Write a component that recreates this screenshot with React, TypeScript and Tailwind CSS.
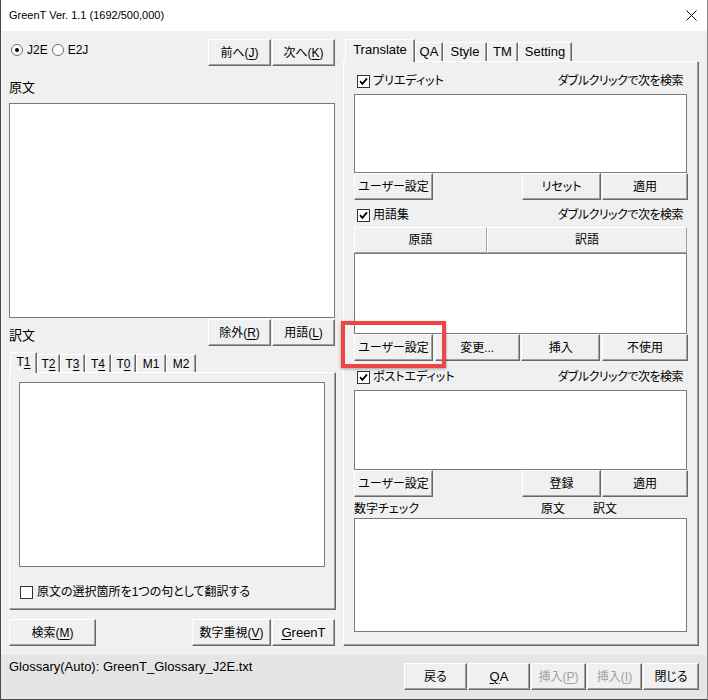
import React from "react";

type P = { children?: React.ReactNode; className?: string };

function Btn({ children, className = "", disabled = false }: P & { disabled?: boolean }) {
  return (
    <div
      className={`flex h-[27px] shrink-0 items-center justify-center border border-t-white border-l-white border-r-[#696969] border-b-[#696969] bg-[#f0f0f0] text-[12px] leading-[16px] shadow-[inset_-1px_-1px_0_#a0a0a0] ${disabled ? "text-[#a0a0a0]" : "text-black"} ${className}`}
    >
      {children}
    </div>
  );
}

function U({ children }: P) {
  return <span className="underline decoration-1 underline-offset-2">{children}</span>;
}

function CheckBox({ checked }: { checked?: boolean }) {
  return (
    <span className="flex h-[13px] w-[13px] shrink-0 items-center justify-center border border-[#333333] bg-white">
      {checked && (
        <svg width="9" height="9" viewBox="0 0 9 9">
          <path d="M1 4.2 L3.4 6.8 L8 1.4" stroke="#000" strokeWidth="1.8" fill="none" />
        </svg>
      )}
    </span>
  );
}

function Radio({ on }: { on?: boolean }) {
  return (
    <span className="flex h-[12px] w-[12px] shrink-0 items-center justify-center rounded-full border border-[#6d6d6d] bg-white">
      {on && <span className="h-[4px] w-[4px] rounded-full bg-black" />}
    </span>
  );
}

function Box({ className = "" }: P) {
  return <div className={`border border-[#7a7a7a] bg-white ${className}`} />;
}

function Tab({ children, sel, className = "" }: P & { sel?: boolean }) {
  return (
    <div
      className={`flex shrink-0 items-center justify-center border border-b-0 border-t-white border-l-white border-r-[#696969] bg-[#f0f0f0] shadow-[inset_-1px_0_0_#a0a0a0] ${sel ? "relative z-10 -mb-px" : ""} ${className}`}
    >
      {children}
    </div>
  );
}

function HeadCell({ children, className = "" }: P) {
  return (
    <div
      className={`flex h-[26px] items-center justify-center border border-t-white border-l-white border-r-[#a0a0a0] border-b-[#a0a0a0] bg-[#f0f0f0] text-[12px] ${className}`}
    >
      {children}
    </div>
  );
}

function CheckRow({ label, className = "" }: { label: string; className?: string }) {
  return (
    <div className={`flex h-[15px] items-center pl-[3px] pr-[5px] text-[12px] leading-[15px] ${className}`}>
      <CheckBox checked />
      <span className="ml-[3px]">{label}</span>
      <span className="ml-auto tracking-[-0.5px]">ダブルクリックで次を検索</span>
    </div>
  );
}

export default function App() {
  return (
    <div className="relative flex h-[700px] w-[708px] flex-col border-x border-b border-l-[#4a4a4a] border-r-[#8a8a8a] border-b-[#4a4a4a] bg-[#f0f0f0] font-['Liberation_Sans','Noto_Sans_CJK_JP',sans-serif] text-black [font-feature-settings:'palt']">
      {/* title bar */}
      <div className="flex h-[31px] shrink-0 items-center justify-between bg-white pl-[8px] pr-[10px]">
        <span className="text-[11px] leading-none">GreenT Ver. 1.1 (1692/500,000)</span>
        <svg width="11" height="11" viewBox="0 0 11 11">
          <path d="M0.5 0.5 L10.5 10.5 M10.5 0.5 L0.5 10.5" stroke="#000" strokeWidth="1" />
        </svg>
      </div>

      {/* body */}
      <div className="flex h-[624px] shrink-0 gap-[8px] px-[8px]">
        {/* left column */}
        <div className="flex w-[326px] flex-col">
          <div className="mt-[8px] flex h-[27px] items-start">
            <div className="ml-[2px] mt-[3px] flex h-[16px] items-center gap-[4px] text-[12px] leading-[16px]">
              <Radio on />
              <span>J2E</span>
              <Radio />
              <span>E2J</span>
            </div>
            <div className="ml-auto flex gap-[1px]">
              <Btn className="w-[63px]">
                前へ(<U>J</U>)
              </Btn>
              <Btn className="w-[63px]">
                次へ(<U>K</U>)
              </Btn>
            </div>
          </div>

          <div className="mt-[14px] h-[16px] text-[13px] leading-[16px]">原文</div>
          <Box className="mt-[7px] h-[215px]" />

          <div className="mt-[1px] flex h-[27px] items-end">
            <span className="pb-[2px] text-[13px] leading-[16px]">訳文</span>
            <div className="ml-auto flex gap-[1px] self-start">
              <Btn className="w-[63px]">
                除外(<U>R</U>)
              </Btn>
              <Btn className="w-[63px]">
                用語(<U>L</U>)
              </Btn>
            </div>
          </div>

          <div className="mt-[6px] flex h-[20px] items-end pl-[1px] text-[12px]">
            <Tab sel className="h-[21px] w-[27px] pb-[2px]">
              T<U>1</U>
            </Tab>
            <Tab className="h-[18px] w-[23px]">
              T<U>2</U>
            </Tab>
            <Tab className="h-[18px] w-[25px]">
              T<U>3</U>
            </Tab>
            <Tab className="h-[18px] w-[26px]">
              T<U>4</U>
            </Tab>
            <Tab className="h-[18px] w-[25px]">
              T<U>0</U>
            </Tab>
            <Tab className="h-[18px] w-[30px]">M1</Tab>
            <Tab className="h-[18px] w-[30px]">M2</Tab>
          </div>
          <div className="flex h-[237px] flex-col border border-t-white border-l-white border-r-[#a0a0a0] border-b-[#a0a0a0] px-[9px] pt-[9px] shadow-[1px_1px_0_#696969]">
            <Box className="h-[185px]" />
            <div className="mt-[18px] flex h-[14px] items-center gap-[4px] pl-[1px] text-[12px] leading-[14px]">
              <CheckBox />
              <span>原文の選択箇所を1つの句として翻訳する</span>
            </div>
          </div>

          <div className="mt-[10px] flex">
            <Btn className="w-[87px]">
              検索(<U>M</U>)
            </Btn>
            <div className="ml-auto flex gap-[1px]">
              <Btn className="w-[79px]">
                数字重視(<U>V</U>)
              </Btn>
              <Btn className="w-[63px] text-[13px]">
                <U>G</U>reenT
              </Btn>
            </div>
          </div>
        </div>

        {/* right column */}
        <div className="flex w-[355px] flex-col">
          <div className="mt-[8px] flex h-[22px] items-end pl-[2px] text-[13px]">
            <Tab sel className="h-[23px] w-[70px] pb-[3px]">
              Translate
            </Tab>
            <Tab className="h-[19px] w-[28px]">QA</Tab>
            <Tab className="h-[19px] w-[44px]">Style</Tab>
            <Tab className="h-[19px] w-[31px]">TM</Tab>
            <Tab className="h-[19px] w-[54px]">Setting</Tab>
          </div>
          <div className="flex h-[584px] flex-col border border-t-white border-l-white border-r-[#a0a0a0] border-b-[#a0a0a0] pl-[10px] pr-[9px] shadow-[1px_1px_0_#696969]">
            <CheckRow label="プリエディット" className="mt-[12px]" />
            <Box className="mr-[1px] mt-[5px] h-[79px]" />
            <div className="flex gap-[1px]">
              <Btn className="w-[79px]">ユーザー設定</Btn>
              <Btn className="ml-auto w-[79px]">リセット</Btn>
              <Btn className="w-[86px]">適用</Btn>
            </div>

            <CheckRow label="用語集" className="mt-[8px]" />
            <div className="mr-[1px] mt-[4px] flex">
              <HeadCell className="w-[133px]">原語</HeadCell>
              <HeadCell className="flex-1">訳語</HeadCell>
            </div>
            <Box className="mr-[1px] h-[81px]" />
            <div className="flex justify-between">
              <Btn className="w-[79px]">ユーザー設定</Btn>
              <Btn className="w-[85px]">変更...</Btn>
              <Btn className="w-[79px]">挿入</Btn>
              <Btn className="w-[86px]">不使用</Btn>
            </div>

            <CheckRow label="ポストエディット" className="mt-[9px]" />
            <Box className="mr-[1px] mt-[5px] h-[80px]" />
            <div className="flex gap-[1px]">
              <Btn className="w-[79px]">ユーザー設定</Btn>
              <Btn className="ml-auto w-[79px]">登録</Btn>
              <Btn className="w-[86px]">適用</Btn>
            </div>

            <div className="mt-[5px] flex h-[15px] items-center text-[12px] leading-[15px]">
              <span className="w-[187px]">数字チェック</span>
              <span className="w-[52px]">原文</span>
              <span>訳文</span>
            </div>
            <Box className="mr-[1px] mt-[1px] h-[114px]" />
          </div>
        </div>
      </div>

      {/* status area */}
      <div className="flex h-[44px] shrink-0 items-start bg-[#e5e5e5] px-[8px]">
        <span className="mt-[4px] text-[13px] leading-[16px]">Glossary(Auto): GreenT_Glossary_J2E.txt</span>
        <div className="ml-auto mt-[8px] flex gap-[1px]">
          <Btn className="w-[63px]">戻る</Btn>
          <Btn className="w-[62px] text-[13px]">
            <U>Q</U>A
          </Btn>
          <Btn disabled className="w-[55px]">
            挿入(<U>P</U>)
          </Btn>
          <Btn disabled className="w-[55px]">
            挿入(<U>I</U>)
          </Btn>
          <Btn className="w-[56px]">閉じる</Btn>
        </div>
      </div>

      {/* highlight overlay */}
      <div className="pointer-events-none absolute left-[340px] top-[321px] h-[47px] w-[105px] border-[4px] border-[#f04545] shadow-[0_1px_3px_rgba(0,0,0,0.35)]" />
    </div>
  );
}
